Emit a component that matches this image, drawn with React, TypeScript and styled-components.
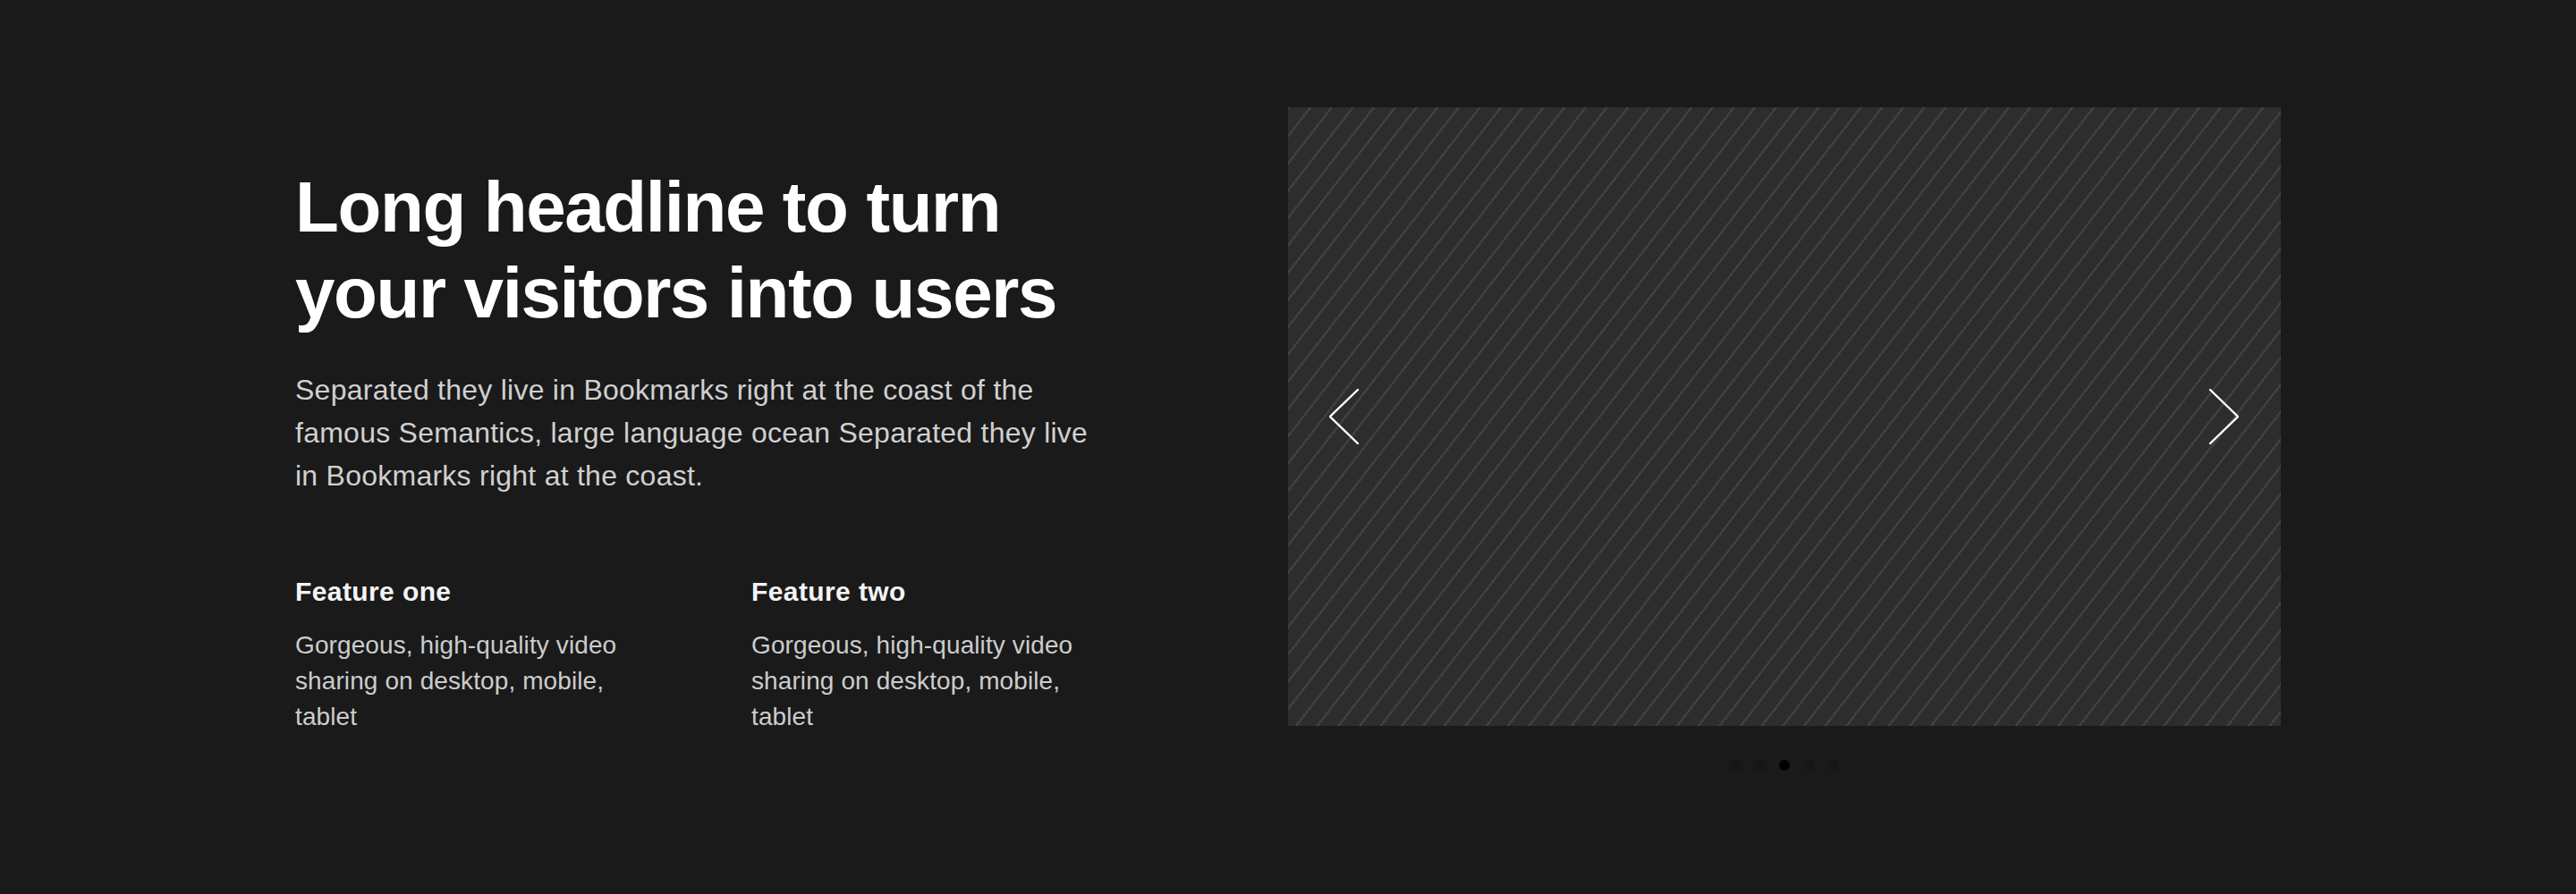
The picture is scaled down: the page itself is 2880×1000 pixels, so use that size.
import React from 'react';
import styled, { createGlobalStyle } from 'styled-components';

const GlobalStyle = createGlobalStyle`
  html, body {
    margin: 0;
    padding: 0;
    background: #1a1a1a;
  }
  body {
    font-family: "Liberation Sans", Arial, Helvetica, sans-serif;
    -webkit-font-smoothing: antialiased;
  }
`;

const Section = styled.section`
  height: 1000px;
  box-sizing: border-box;
  padding: 120px 0 100px;
  background: #1a1a1a;
  overflow: hidden;
`;

const Container = styled.div`
  width: 2220px;
  margin: 0 auto;
  display: flex;
  justify-content: space-between;
  align-items: center;
`;

const TextColumn = styled.div`
  width: 900px;
  display: flex;
  flex-direction: column;
`;

const Headline = styled.h1`
  margin: 0;
  font-size: 80px;
  line-height: 96px;
  font-weight: 700;
  letter-spacing: -1.4px;
  color: #ffffff;
`;

const Lead = styled.p`
  margin: 36px 0 0;
  font-size: 32px;
  line-height: 48px;
  letter-spacing: 0.25px;
  color: #d0d0d0;
`;

const Features = styled.div`
  margin-top: 88px;
  display: grid;
  grid-template-columns: 390px 390px;
  column-gap: 120px;
`;

const Feature = styled.div`
  display: flex;
  flex-direction: column;
  gap: 22px;
`;

const FeatureTitle = styled.h3`
  margin: 0;
  font-size: 30px;
  line-height: 36px;
  font-weight: 700;
  letter-spacing: 0.4px;
  color: #f4f4f4;
`;

const FeatureText = styled.p`
  margin: 0;
  font-size: 28px;
  line-height: 40px;
  letter-spacing: 0.1px;
  color: #cccccc;
`;

const MediaColumn = styled.div`
  width: 1110px;
  display: flex;
  flex-direction: column;
  align-items: center;
  padding-bottom: 24px;
`;

const Slide = styled.div`
  position: relative;
  width: 1110px;
  height: 692px;
  background-color: #2d2d2d;
  background-image: repeating-linear-gradient(
    127.8deg,
    #404040 0px,
    #404040 2.4px,
    transparent 2.4px,
    transparent 18.7px
  );
`;

const Arrow = styled.button<{ $side: 'left' | 'right' }>`
  position: absolute;
  top: 50%;
  ${(p) => (p.$side === 'left' ? 'left: 45px;' : 'right: 46px;')}
  transform: translateY(-50%);
  width: 36px;
  height: 66px;
  padding: 0;
  border: none;
  background: none;
  cursor: pointer;
  display: flex;
  align-items: center;
  justify-content: center;
`;

const Dots = styled.div`
  margin-top: 38px;
  display: flex;
  gap: 15px;
`;

const Dot = styled.span<{ $active?: boolean }>`
  width: 12px;
  height: 12px;
  border-radius: 50%;
  background: ${(p) => (p.$active ? '#000000' : '#161616')};
`;

const Chevron = ({ dir }: { dir: 'left' | 'right' }) => (
  <svg width="34" height="64" viewBox="0 0 34 64" fill="none">
    <polyline
      points={dir === 'left' ? '32,2 1,32 32,62' : '2,2 33,32 2,62'}
      stroke="#ffffff"
      strokeWidth="2.4"
      strokeLinecap="round"
      strokeLinejoin="miter"
    />
  </svg>
);

const features = [
  { title: 'Feature one', text: 'Gorgeous, high-quality video sharing on desktop, mobile, tablet' },
  { title: 'Feature two', text: 'Gorgeous, high-quality video sharing on desktop, mobile, tablet' },
];

export default function App() {
  return (
    <>
      <GlobalStyle />
      <Section>
        <Container>
          <TextColumn>
            <Headline>
              Long headline to turn your visitors into users
            </Headline>
            <Lead>
              Separated they live in Bookmarks right at the coast of the famous
              Semantics, large language ocean Separated they live in Bookmarks
              right at the coast.
            </Lead>
            <Features>
              {features.map((f) => (
                <Feature key={f.title}>
                  <FeatureTitle>{f.title}</FeatureTitle>
                  <FeatureText>{f.text}</FeatureText>
                </Feature>
              ))}
            </Features>
          </TextColumn>
          <MediaColumn>
            <Slide>
              <Arrow $side="left" aria-label="Previous">
                <Chevron dir="left" />
              </Arrow>
              <Arrow $side="right" aria-label="Next">
                <Chevron dir="right" />
              </Arrow>
            </Slide>
            <Dots>
              {[0, 1, 2, 3, 4].map((i) => (
                <Dot key={i} $active={i === 2} />
              ))}
            </Dots>
          </MediaColumn>
        </Container>
      </Section>
    </>
  );
}
